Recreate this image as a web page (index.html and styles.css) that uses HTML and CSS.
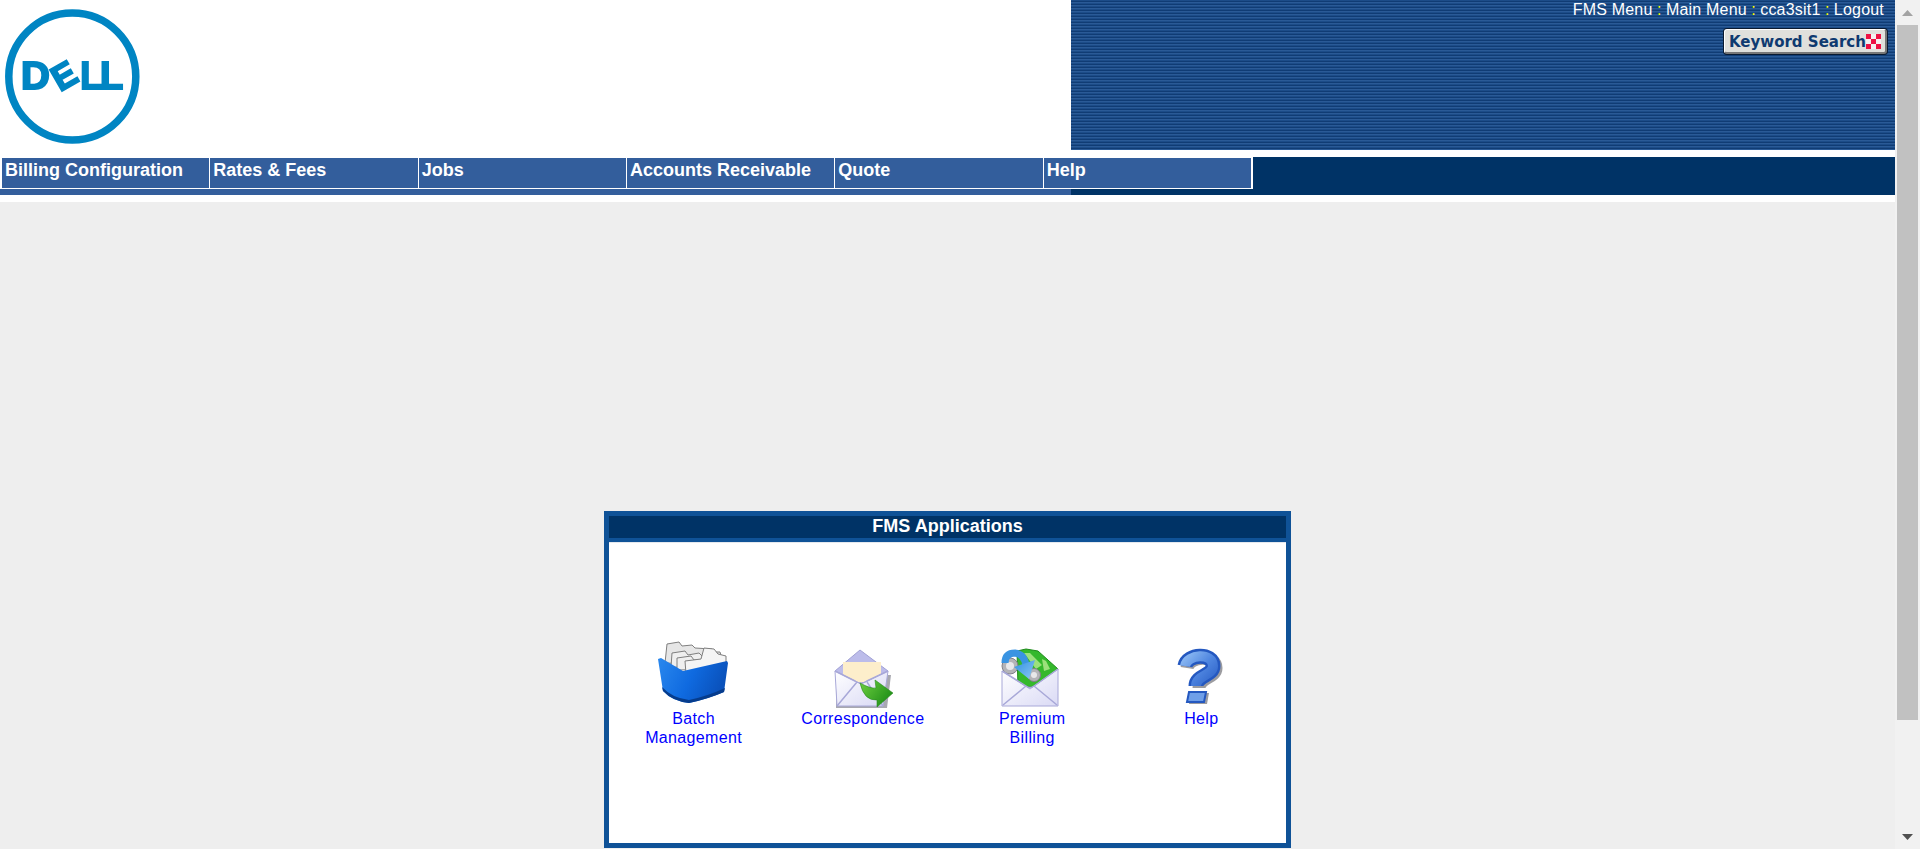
FILE: index.html
```html
<!DOCTYPE html>
<html lang="en">
<head>
<meta charset="utf-8">
<title>FMS Applications</title>
<link rel="stylesheet" href="styles.css">
</head>
<body>
<div class="page">
  <header class="top">
    <div class="brand">
      <svg class="logo" width="150" height="150" viewBox="0 0 150 150">
        <circle class="logo-ring" cx="72.3" cy="76.5" r="63.5"/>
        <text class="logo-word" transform="translate(21 89) scale(1.05 1)">D</text>
        <text class="logo-word logo-e" transform="translate(60 92) rotate(-30)">E</text>
        <text class="logo-word" transform="translate(80.2 89) scale(.95 1)">L</text>
        <text class="logo-word" transform="translate(100 89)">L</text>
      </svg>
    </div>
    <div class="banner">
      <nav class="util">
        <a>FMS Menu</a> <span class="sep">:</span> <a>Main Menu</a> <span class="sep">:</span> <a>cca3sit1</a> <span class="sep">:</span> <a>Logout</a>
      </nav>
      <div class="kw-wrap">
        <div class="kw">
          <span class="kw-label">Keyword Search</span>
          <svg class="kw-x" width="15" height="15" viewBox="0 0 15 15">
            <rect class="kw-x-bg" width="15" height="15"/>
            <rect class="kw-x-r" width="5" height="5"/>
            <rect class="kw-x-r" x="10" width="5" height="5"/>
            <rect class="kw-x-r" x="5" y="5" width="5" height="5"/>
            <rect class="kw-x-r" y="10" width="5" height="5"/>
            <rect class="kw-x-r" x="10" y="10" width="5" height="5"/>
          </svg>
        </div>
      </div>
    </div>
  </header>

  <div class="band">
    <ul class="menu">
      <li>Billing Configuration</li>
      <li>Rates &amp; Fees</li>
      <li>Jobs</li>
      <li>Accounts Receivable</li>
      <li>Quote</li>
      <li>Help</li>
    </ul>
  </div>

  <main class="content">
    <section class="panel">
      <h1 class="panel-title">FMS Applications</h1>
      <div class="panel-body">
        <a class="app">
          <svg class="icon" width="72" height="70" viewBox="0 0 72 70">
            <defs>
              <linearGradient id="tub" x1="0" y1="0" x2="1" y2="0.3">
                <stop offset="0" stop-color="#2a88ee"/>
                <stop offset=".55" stop-color="#0f6ae0"/>
                <stop offset="1" stop-color="#0a52bc"/>
              </linearGradient>
            </defs>
            <path class="paper back" d="M7 24 L9 5 L21 3 L24 7 L34 6 L37 9 L54 10 L56 13 L62 13 L66 26 Z"/>
            <path class="paper mid" d="M13 28 L14 14 L27 12 L30 16 L41 14 L44 17 L58 17 L62 30 Z"/>
            <path class="paper mid" d="M19 31 L19 19 L33 17 L36 21 L58 20 L62 30 Z"/>
            <path class="paper front" d="M28 35 L27 22 L43 20 L46 9 L56 10 L60 15 L68 17 L68 30 Z"/>
            <path class="tub" d="M0 20 L3 19 L25 32 L69 22 L70 24 L66 53 Q50 60 31 64 Q14 62 5 52 Z"/>
            <path class="tub-shade" d="M5 52 Q14 62 31 64 Q50 60 66 53 L67 49 Q50 57 31 61 Q14 59 4 48 Z"/>
          </svg>
          <span>Batch<br>Management</span>
        </a>
        <a class="app">
          <svg class="icon" width="72" height="70" viewBox="0 0 72 70">
            <defs>
              <linearGradient id="env" x1="0" y1="0" x2="1" y2="1">
                <stop offset="0" stop-color="#ffffff"/>
                <stop offset="1" stop-color="#d8d8f4"/>
              </linearGradient>
              <linearGradient id="arrow" x1="0" y1="0" x2="1" y2="0.6">
                <stop offset="0" stop-color="#6fd040"/>
                <stop offset="1" stop-color="#1f8f18"/>
              </linearGradient>
            </defs>
            <path class="shadow" d="M9 36 L64 36 L60 69 L9 69 Z"/>
            <path class="flap" d="M8 32 L33 11 L61 32 L50 46 L18 46 Z"/>
            <path class="letter" d="M16 23 L54 23 L54 44 L16 44 Z"/>
            <path class="env" d="M8 32 L34 45 L61 32 L56 67 L10 67 Z"/>
            <path class="env-line" d="M10 67 L30 43 M56 67 L40 43 M8 32 L28 42 Q34 46 40 42 L61 32"/>
            <path class="green" d="M33 44 Q44 50 49 49 L48 41 L66 54 L50 68 L50 61 Q37 62 33 44 Z"/>
          </svg>
          <span>Correspondence</span>
        </a>
        <a class="app">
          <svg class="icon" width="72" height="70" viewBox="0 0 72 70">
            <defs>
              <linearGradient id="env2" x1="0" y1="0" x2="1" y2="1">
                <stop offset="0" stop-color="#ffffff"/>
                <stop offset="1" stop-color="#dadaf5"/>
              </linearGradient>
              <linearGradient id="blue2" x1="0" y1="0" x2="1" y2="1">
                <stop offset="0" stop-color="#2f8fe0"/>
                <stop offset="1" stop-color="#8cc8f5"/>
              </linearGradient>
            </defs>
            <path class="money" d="M21 12 L30 10 L42 12 L62 30 L50 48 L22 48 Z"/>
            <path class="money-d" d="M28 14 L34 14 L46 26 L40 30 Z M46 20 L50 22 L54 30 L48 32 Z"/>
            <circle class="coin" cx="14" cy="27" r="8"/>
            <circle class="coin-i" cx="14" cy="27" r="4"/>
            <circle class="coin" cx="38" cy="36" r="6.500"/>
            <circle class="coin-i" cx="38" cy="36" r="3"/>
            <path class="env-b" d="M6 32 L34 50 L62 30 L62 67 L6 67 Z"/>
            <path class="env-line" d="M7 66 L30 47 M61 66 L38 47 M6 32 L30 47 Q34 50 38 47 L62 30"/>
            <path class="blue-arc" d="M9 24 Q9 14 19 14 Q28 15 30 26"/>
            <path class="blue-head" d="M18 28 L39 21 L33 40 Z"/>
          </svg>
          <span>Premium<br>Billing</span>
        </a>
        <a class="app">
          <svg class="icon" width="72" height="70" viewBox="0 0 72 70">
            <defs>
              <linearGradient id="q" x1="0" y1="0" x2="1" y2="1">
                <stop offset="0" stop-color="#8ab8f2"/>
                <stop offset=".5" stop-color="#4f86e0"/>
                <stop offset="1" stop-color="#2d62c8"/>
              </linearGradient>
            </defs>
            <path class="q-sh" d="M22 29 C24 17 51 15 51 29 C51 39 34 38 34 49"/>
            <polygon class="q-sh-d" points="26,54 44,54 42,65 24,65"/>
            <path class="q-o" d="M20 27 C22 15 48 13 48 27 C48 37 31 36 31 47"/>
            <path class="q-f" d="M20 27 C22 15 48 13 48 27 C48 37 31 36 31 47"/>
            <polygon class="q-d" points="24,53 41,53 39,63 22,63"/>
          </svg>
          <span>Help</span>
        </a>
      </div>
    </section>
  </main>
</div>

<aside class="scrollbar">
  <div class="sb-btn"><svg width="11" height="6" viewBox="0 0 11 6"><path class="sb-up" d="M5.500 0 L11 6 L0 6 Z"/></svg></div>
  <div class="sb-thumb"></div>
  <div class="sb-track"></div>
  <div class="sb-btn"><svg width="11" height="6" viewBox="0 0 11 6"><path class="sb-down" d="M0 0 L11 0 L5.500 6 Z"/></svg></div>
</aside>
</body>
</html>
```
FILE: styles.css
```css
html, body {
  margin: 0;
  height: 100%;
}
body {
  display: flex;
  height: 849px;
  overflow: hidden;
  background: #fff;
  font-family: "Liberation Sans", Arial, sans-serif;
}
.page {
  flex: 1;
  min-width: 0;
  display: flex;
  flex-direction: column;
}

/* header */
.top {
  display: flex;
  height: 150px;
  flex: none;
}
.brand {
  width: 1071px;
  flex: none;
}
.logo {
  display: block;
  filter: blur(.4px);
}
.logo-ring {
  fill: none;
  stroke: #0085c3;
  stroke-width: 7.5;
}
.logo-word {
  font: bold 38px "Liberation Sans", Arial, sans-serif;
  fill: #0085c3;
  stroke: #0085c3;
  stroke-width: 2;
}
.logo-e {
  font-size: 35px;
}
.banner {
  flex: 1;
  display: flex;
  flex-direction: column;
  background: repeating-linear-gradient(to bottom, #1c4c88 0, #1c4c88 1px, #103c74 1px, #103c74 2px, #2a5a96 2px, #2a5a96 3px);
}
.util {
  text-align: right;
  padding: 1px 11px 0 0;
  font-size: 16px;
  line-height: 18px;
  color: #fff;
}
.util a {
  letter-spacing: .2px;
}
.sep {
  color: #ff0;
}
.kw-wrap {
  display: flex;
  justify-content: flex-end;
  padding: 10px 8px 0 0;
}
.kw {
  box-sizing: border-box;
  width: 163px;
  height: 25px;
  display: flex;
  align-items: center;
  justify-content: space-between;
  padding: 0 4px 0 4px;
  background: #e0e0dc;
  border-radius: 3px;
  border: 1px solid #fff;
  border-right: 2px solid #777;
  border-bottom: 2px solid #777;
  box-shadow: 0 0 0 1px #0a1a30;
  font: bold 15px "DejaVu Sans", Verdana, sans-serif;
  color: #0f3a70;
  white-space: nowrap;
}
.kw-label {
  padding-top: 2px;
}
.kw-x {
  flex: none;
}
.kw-x-bg {
  fill: #f4f0f0;
}
.kw-x-r {
  fill: #ee1144;
}

/* menu band */
.band {
  flex: none;
  margin-top: 7px;
  height: 38px;
  background: linear-gradient(to right, #335e9c 1071px, #003366 1071px);
}
.menu {
  box-sizing: border-box;
  width: 1253px;
  display: grid;
  grid-template-columns: repeat(6, 1fr);
  gap: 1px;
  margin: 0;
  padding: 1px 2px 1px 2px;
  list-style: none;
  background: #fff;
}
.menu li {
  height: 30px;
  box-sizing: border-box;
  padding: 2px 0 0 3px;
  background: #335e9c;
  color: #fff;
  font-weight: bold;
  font-size: 18px;
  line-height: 21px;
  white-space: nowrap;
}

/* content */
.content {
  flex: 1;
  margin-top: 7px;
  background: #eeeeee;
  padding-top: 309px;
  min-height: 0;
}
.panel {
  box-sizing: border-box;
  width: 687px;
  height: 337px;
  margin: 0 auto;
  display: flex;
  flex-direction: column;
  background: #fff;
  border: 5px solid #0f5297;
}
.panel-title {
  flex: none;
  margin: 0;
  height: 26px;
  box-sizing: border-box;
  border-bottom: 4px solid #0f5297;
  background: #003366;
  background-clip: padding-box;
  color: #fff;
  font-size: 18px;
  font-weight: bold;
  line-height: 21px;
  text-align: center;
}
.panel-body {
  flex: 1;
  display: grid;
  grid-template-columns: repeat(4, 1fr);
  grid-template-rows: 108px;
  align-content: center;
  border-top: 1px solid #e4e8ee;
}
.app {
  display: flex;
  flex-direction: column;
  align-items: center;
  color: #0000ff;
  font-size: 16px;
  line-height: 19px;
  letter-spacing: .35px;
  text-align: center;
}
.icon {
  display: block;
  flex: none;
  filter: blur(.45px);
}

/* batch icon */
.paper {
  stroke: #7f7f7f;
  stroke-width: 1;
}
.back { fill: #e6e6e6; }
.mid { fill: #efefef; }
.front { fill: #f5f5f5; }
.tub { fill: url(#tub); }
.tub-shade { fill: #063c8c; }

/* envelope icons */
.shadow { fill: #a8a8b0; }
.flap { fill: #bcbcea; stroke: #a0a0d4; }
.letter { fill: #fdeecb; }
.env { fill: url(#env); stroke: #a8a8d8; }
.env-b { fill: url(#env2); stroke: #a8a8d8; }
.env-line { fill: none; stroke: #a8a8d8; stroke-width: 1.500; }
.green { fill: url(#arrow); stroke: #2a8a20; stroke-width: .6; }
.money { fill: #35b82c; stroke: #1e8a1a; }
.money-d { fill: #9ce07c; }
.coin { fill: #b4b4b8; stroke: #808088; }
.coin-i { fill: #e8e8ea; }
.blue-arc { fill: none; stroke: #3a94e2; stroke-width: 7; }
.blue-head { fill: url(#blue2); }

/* help icon */
.q-sh { fill: none; stroke: #5a5a60; stroke-width: 13; opacity: .6; }
.q-sh-d { fill: #5a5a60; opacity: .6; }
.q-o { fill: none; stroke: #2458c0; stroke-width: 15; }
.q-f { fill: none; stroke: url(#q); stroke-width: 10; }
.q-d { fill: #6f9fe8; stroke: #2458c0; stroke-width: 2; }

/* scrollbar */
.scrollbar {
  flex: none;
  width: 25px;
  display: flex;
  flex-direction: column;
  background: #f1f1f1;
}
.sb-btn {
  flex: none;
  height: 25px;
  display: flex;
  align-items: center;
  justify-content: center;
}
.sb-btn svg {
  display: block;
}
.sb-up { fill: #a3a3a3; }
.sb-down { fill: #505050; }
.sb-thumb {
  flex: none;
  height: 695px;
  margin: 0 2px;
  background: #c1c1c1;
}
.sb-track {
  flex: 1;
}
```
